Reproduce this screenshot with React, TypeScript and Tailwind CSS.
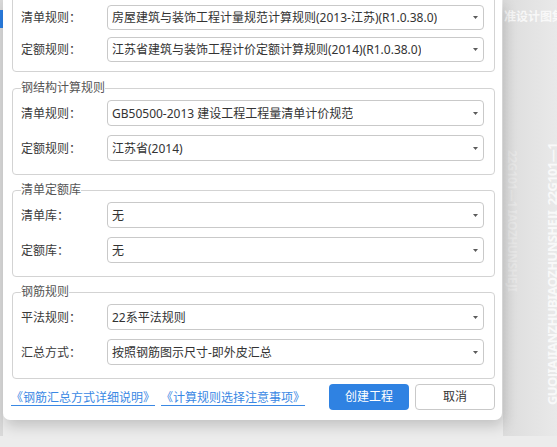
import React from "react";

const font = "font-['Noto_Sans','Noto_Sans_CJK_SC',sans-serif]";

function Select({ value, h = "h-[26px]" }: { value: string; h?: string }) {
  return (
    <div className={`flex ${h} flex-1 items-center justify-between rounded-[4px] border border-[#c9c9c9] bg-white pl-[4px] pr-[5px]`}>
      <span className="truncate text-[12px] leading-[17px] text-[#333]">{value}</span>
      <svg width="5" height="3" viewBox="0 0 5 3" className="shrink-0">
        <path d="M0 0h5L2.5 3z" fill="#5b5b5b" />
      </svg>
    </div>
  );
}

function Row({ label, value, h }: { label: string; value: string; h?: string }) {
  return (
    <div className="flex items-center">
      <div className="w-[86px] text-[12px] leading-[17px] text-[#3a3a3a]">{label}</div>
      <Select value={value} h={h} />
    </div>
  );
}

function Group({ title, className, children }: { title: string; className?: string; children: React.ReactNode }) {
  return (
    <fieldset className={`rounded-[4px] border border-[#d3d3d3] pl-[8px] pr-[10px] ${className ?? ""}`}>
      <legend className="px-0 text-[12px] leading-[16px] text-[#555]">{title}</legend>
      <div className="flex flex-col gap-[9px] pt-[4px] pb-[13px]">{children}</div>
    </fieldset>
  );
}

export default function App() {
  return (
    <div className={`relative h-[447px] w-[557px] overflow-hidden bg-[#ececec] ${font}`}>
      {/* desktop behind the dialog */}
      <div className="flex h-[436px]">
        <div className="flex w-[3px] flex-col bg-[#d9d9d9]">
          <div className="mt-[10px] h-[18px] bg-[#2a7de1]" />
        </div>
        <div className="flex-1" />
        <div className="relative w-[54px] overflow-hidden bg-gradient-to-r from-[#dcdcdc] via-[#e3e3e3] to-[#e9e9e9]">
          <div className="mt-[10px] whitespace-nowrap pl-[1px] text-[12px] font-bold leading-[14px] text-white/75">准设计图集</div>
          <div className="absolute bottom-[31px] left-[42px] rotate-180 whitespace-nowrap text-[13px] font-bold leading-[14px] tracking-[-0.6px] text-white/75 [writing-mode:vertical-rl]">
            GUOJIAJIANZHUBIAOZHUNSHEJI&nbsp;&nbsp;22G101—1
          </div>
          <div className="absolute left-[3px] top-[150px] whitespace-nowrap text-[12px] font-bold leading-[13px] tracking-[-0.6px] text-white/25 [writing-mode:vertical-rl]">
            22G101—1&nbsp;IAOZHUNSHEJI
          </div>
        </div>
      </div>

      {/* dialog window */}
      <div className="absolute left-[3px] top-0 flex h-[420px] w-[499px] flex-col rounded-b-[7px] bg-white pl-[9px] pr-[7px] shadow-[2px_6px_14px_rgba(0,0,0,0.18)]">
        <div className="-mt-[20px] flex flex-col gap-[7px] rounded-[4px] border border-[#d3d3d3] pb-[9px] pl-[8px] pr-[10px] pt-[24px]">
          <Row label="清单规则：" value="房屋建筑与装饰工程计量规范计算规则(2013-江苏)(R1.0.38.0)" h="h-[25px]" />
          <Row label="定额规则：" value="江苏省建筑与装饰工程计价定额计算规则(2014)(R1.0.38.0)" h="h-[25px]" />
        </div>
        <Group title="钢结构计算规则" className="mt-[8px]">
          <Row label="清单规则：" value="GB50500-2013 建设工程工程量清单计价规范" />
          <Row label="定额规则：" value="江苏省(2014)" />
        </Group>
        <Group title="清单定额库" className="mt-[7px]">
          <Row label="清单库：" value="无" />
          <Row label="定额库：" value="无" />
        </Group>
        <Group title="钢筋规则" className="mt-[7px]">
          <Row label="平法规则：" value="22系平法规则" />
          <Row label="汇总方式：" value="按照钢筋图示尺寸-即外皮汇总" />
        </Group>
        <div className="mt-[5px] flex items-center">
          <div className="-ml-px flex flex-1 items-center gap-[6px] text-[12px] leading-[17px] text-[#3a88e4]">
            <a className="underline underline-offset-[3px]">《钢筋汇总方式详细说明》</a>
            <a className="underline underline-offset-[3px]">《计算规则选择注意事项》</a>
          </div>
          <div className="flex gap-[6px]">
            <button className="h-[26px] w-[80px] rounded-[4px] bg-[#2f82e2] text-[12px] leading-none text-white">创建工程</button>
            <button className="h-[26px] w-[80px] rounded-[4px] border border-[#c9c9c9] bg-white text-[12px] leading-none text-[#333]">取消</button>
          </div>
        </div>
      </div>
    </div>
  );
}
